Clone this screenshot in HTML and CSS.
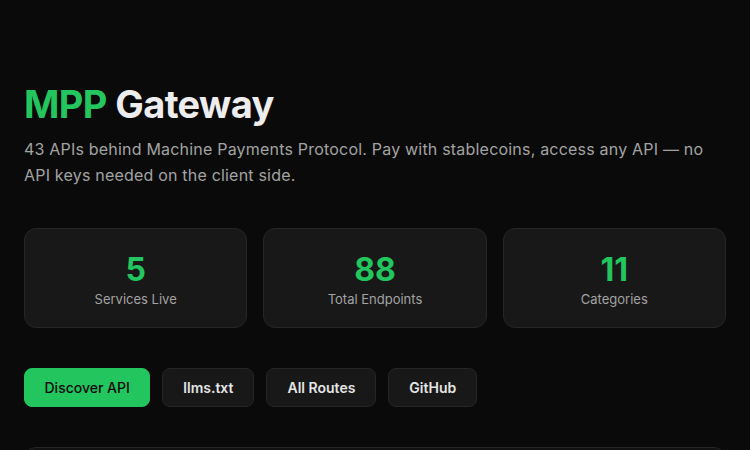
FILE: index.html
```html
<!DOCTYPE html>
<html lang="en">
<head>
<meta charset="utf-8">
<title>MPP Gateway</title>
<link rel="stylesheet" href="styles.css">
</head>
<body>
<main class="page">
  <header class="hero">
    <h1 class="title"><span class="accent">MPP</span> Gateway</h1>
    <p class="subtitle">43 APIs behind Machine Payments Protocol. Pay with stablecoins, access any API — no API keys needed on the client side.</p>
  </header>
  <section class="stats">
    <div class="stat"><div class="stat-num">5</div><div class="stat-label">Services Live</div></div>
    <div class="stat"><div class="stat-num">88</div><div class="stat-label">Total Endpoints</div></div>
    <div class="stat"><div class="stat-num">11</div><div class="stat-label">Categories</div></div>
  </section>
  <nav class="actions">
    <a class="btn btn-primary" href="#">Discover API</a>
    <a class="btn" href="#">llms.txt</a>
    <a class="btn" href="#">All Routes</a>
    <a class="btn" href="#">GitHub</a>
  </nav>
  <section class="panel"></section>
</main>
</body>
</html>
```

FILE: styles.css
```css
* { box-sizing: border-box; }
html, body { margin: 0; padding: 0; }
body {
  background: #0a0a0a;
  color: #e5e5e5;
  font-family: Inter, "Noto Sans", sans-serif;
}
.page {
  padding: 82px 24px 0;
}
.title {
  margin: 0 0 8px;
  font-size: 38px;
  line-height: 1.2;
  font-weight: 700;
  letter-spacing: -0.6px;
  color: #ededed;
}
.accent { color: #22c55e; }
.subtitle {
  margin: 0;
  font-size: 16px;
  line-height: 26px;
  letter-spacing: 0.2px;
  color: #a3a3a3;
}
.stats {
  display: grid;
  grid-template-columns: repeat(3, 1fr);
  gap: 16px;
  margin-top: 40px;
}
.stat {
  background: #181818;
  border: 1px solid #262626;
  border-radius: 12px;
  padding: 23px 16px;
  text-align: center;
  height: 100px;
}
.stat-num {
  font-size: 32px;
  line-height: 36px;
  font-weight: 700;
  color: #22c55e;
}
.stat-label {
  margin-top: 3px;
  font-size: 13px;
  line-height: 16px;
  color: #a3a3a3;
}
.actions {
  display: flex;
  gap: 12px;
  margin-top: 40px;
}
.btn {
  display: inline-block;
  padding: 10px 20px;
  border-radius: 8px;
  border: 1px solid #262626;
  background: #181818;
  color: #e5e5e5;
  font-size: 14px;
  line-height: 17px;
  font-weight: 600;
  text-decoration: none;
}
.btn-primary {
  padding: 10px 19.5px;
  background: #22c55e;
  border-color: #22c55e;
  color: #0a0a0a;
  font-weight: 500;
}
.panel {
  margin-top: 40px;
  height: 200px;
  background: #111111;
  border: 1px solid #262626;
  border-radius: 12px;
}
```
